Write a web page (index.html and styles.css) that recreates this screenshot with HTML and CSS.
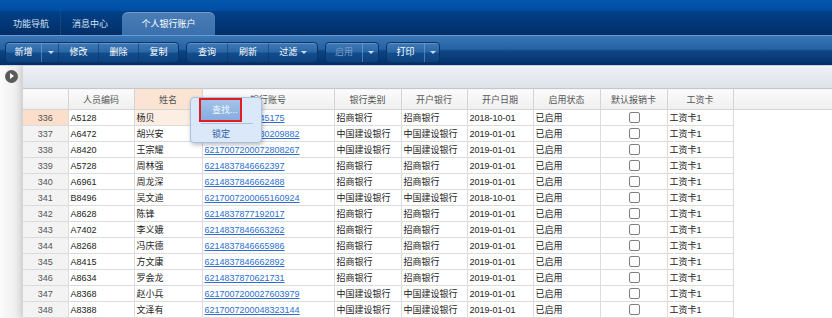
FILE: index.html
```html
<!DOCTYPE html>
<html lang="zh">
<head>
  <meta charset="UTF-8" />
  <title>个人银行账户</title>
  <link rel="stylesheet" href="styles.css">
</head>
<body>
<div class="page">
  <div class="topbar"></div>
  <div class="tabs">
    <div class="tab tab-nav">功能导航</div>
    <div class="tab tab-msg">消息中心</div>
    <div class="tab tab-active">个人银行账户</div>
  </div>

  <div class="toolbar">
    <div class="btn-group">
      <span class="btn w35">新增</span><span class="btn drop w17"><i class="arrow"></i></span>
      <span class="btn w40">修改</span><span class="btn w40">删除</span><span class="btn w40">复制</span>
    </div>
    <div class="btn-group">
      <span class="btn w40">查询</span><span class="btn w41">刷新</span><span class="btn w49">过滤 <i class="arrow"></i></span>
    </div>
    <div class="btn-group disabled">
      <span class="btn w36">启用</span><span class="btn drop w16"><i class="arrow"></i></span>
    </div>
    <div class="btn-group">
      <span class="btn w37">打印</span><span class="btn drop w15"><i class="arrow"></i></span>
    </div>
  </div>

  <div class="content">
    <div class="side">
      <span class="toggle"><i></i></span>
    </div>
    <div class="main">
      <div class="band"></div>
      <table class="grid">
        <colgroup>
          <col style="width:45px"><col style="width:66px"><col style="width:68px"><col style="width:132px">
          <col style="width:67px"><col style="width:66px"><col style="width:66px"><col style="width:67px">
          <col style="width:67px"><col style="width:66px"><col>
        </colgroup>
        <thead>
          <tr>
            <th></th><th>人员编码</th><th class="sel">姓名</th><th>银行账号</th><th>银行类别</th>
            <th>开户银行</th><th>开户日期</th><th>启用状态</th><th>默认报销卡</th><th>工资卡</th><th class="rest"></th>
          </tr>
        </thead>
        <tbody id="rows"></tbody>
      </table>
    </div>

    <div class="popup">
      <div class="menu-item active">查找...</div>
      <div class="menu-sep"></div>
      <div class="menu-item">锁定</div>
    </div>
  </div>
</div>

<script>
  const dados = [
    ['336', 'A5128', '杨贝', '6214837846645175', '招商银行', '招商银行', '2018-10-01'],
    ['337', 'A6472', '胡兴安', '6217007200030209882', '中国建设银行', '中国建设银行', '2019-01-01'],
    ['338', 'A8420', '王宗耀', '6217007200072808267', '中国建设银行', '中国建设银行', '2019-01-01'],
    ['339', 'A5728', '周林强', '6214837846662397', '招商银行', '招商银行', '2019-01-01'],
    ['340', 'A6961', '周龙深', '6214837846662488', '招商银行', '招商银行', '2019-01-01'],
    ['341', 'B8496', '吴文迪', '6217007200065160924', '中国建设银行', '中国建设银行', '2018-10-01'],
    ['342', 'A8628', '陈锋', '6214837877192017', '招商银行', '招商银行', '2019-01-01'],
    ['343', 'A7402', '李义娥', '6214837846663262', '招商银行', '招商银行', '2019-01-01'],
    ['344', 'A8268', '冯庆德', '6214837846665986', '招商银行', '招商银行', '2019-01-01'],
    ['345', 'A8415', '方文康', '6214837846662892', '招商银行', '招商银行', '2019-01-01'],
    ['346', 'A8634', '罗会龙', '6214837870621731', '招商银行', '招商银行', '2019-01-01'],
    ['347', 'A8368', '赵小兵', '6217007200027603979', '中国建设银行', '中国建设银行', '2019-01-01'],
    ['348', 'A8388', '文泽有', '6217007200048323144', '中国建设银行', '中国建设银行', '2019-01-01']
  ];

  const tbody = document.getElementById('rows');
  dados.forEach((d, i) => {
    const tr = document.createElement('tr');
    if (i === 0) tr.className = 'current';
    tr.innerHTML =
      '<td class="num">' + d[0] + '</td>' +
      '<td>' + d[1] + '</td>' +
      '<td class="name">' + d[2] + '</td>' +
      '<td><a href="#">' + d[3] + '</a></td>' +
      '<td>' + d[4] + '</td>' +
      '<td>' + d[5] + '</td>' +
      '<td>' + d[6] + '</td>' +
      '<td>已启用</td>' +
      '<td class="center"><span class="check"></span></td>' +
      '<td>工资卡1</td>' +
      '<td class="rest"></td>';
    tbody.appendChild(tr);
  });
</script>
</body>
</html>
```

FILE: styles.css
```css
body {
  margin: 0;
  font-family: "Liberation Sans", "Noto Sans CJK SC", sans-serif;
  font-size: 9px;
  background-color: #ffffff;
  color: #222;
}

.page {
  width: 832px;
  height: 318px;
  overflow: hidden;
}

.topbar {
  height: 11px;
  background: linear-gradient(#0157ad, #004ea3);
}

/* abas */
.tabs {
  display: flex;
  align-items: flex-end;
  height: 24px;
  background: linear-gradient(#02418a, #022e66);
}

.tab {
  height: 23px;
  line-height: 25px;
  color: #d5e2f2;
  box-sizing: border-box;
}

.tab-nav {
  width: 61px;
  padding-left: 13px;
  border-right: 1px dotted #2b5389;
}

.tab-msg {
  width: 61px;
  padding-left: 11px;
}

.tab-active {
  width: 93px;
  text-align: center;
  color: #fff;
  border-radius: 6px 6px 0 0;
  background: linear-gradient(#4a7db6, #3a70ad);
  box-shadow: inset 0 1px 0 rgba(255,255,255,0.25);
}

/* barra de ferramentas */
.toolbar {
  display: flex;
  gap: 6px;
  height: 31px;
  padding: 6px 0 0 5px;
  box-sizing: border-box;
  border-top: 1px solid #6b9ad0;
  border-bottom: 1px solid #cfd9e6;
  background: linear-gradient(#3a76b6 0%, #2562a3 45%, #0d4584 52%, #04306a 100%);
}

.btn-group {
  display: flex;
  height: 21px;
  border: 1px solid #0b3468;
  border-radius: 4px;
  box-sizing: border-box;
  overflow: hidden;
  background: linear-gradient(#3f79b7 0%, #2a66a6 48%, #134d8d 52%, #0d427f 100%);
  box-shadow: inset 0 1px 0 rgba(255,255,255,0.2);
}

.btn-group + .btn-group { margin-left: 1px; }

.btn {
  color: #fff;
  line-height: 19px;
  text-align: center;
  border-left: 1px solid rgba(10, 45, 90, 0.45);
  box-sizing: border-box;
}

.btn:first-child { border-left: none; }

.btn.drop { border-left: 1px solid rgba(150, 185, 225, 0.45); }

.disabled .btn { color: #7c9bc3; }

.arrow {
  display: inline-block;
  width: 0;
  height: 0;
  border-left: 3px solid transparent;
  border-right: 3px solid transparent;
  border-top: 3px solid #c9d9ee;
  vertical-align: middle;
  margin-left: 1px;
}

.w15 { width: 15px; }
.w16 { width: 16px; }
.w17 { width: 17px; }
.w35 { width: 35px; }
.w36 { width: 36px; }
.w37 { width: 37px; }
.w40 { width: 40px; }
.w41 { width: 41px; }
.w49 { width: 49px; }

/* conteudo */
.content {
  display: flex;
  position: relative;
  height: 252px;
}

.side {
  width: 23px;
  flex: none;
  background: linear-gradient(to right, #fbfbfb, #e9e9e9);
}

.toggle {
  display: block;
  width: 13px;
  height: 13px;
  margin: 4px 0 0 5px;
  border-radius: 50%;
  background: #5a5a5a;
  position: relative;
}

.toggle i {
  position: absolute;
  left: 5px;
  top: 3px;
  border-top: 3.5px solid transparent;
  border-bottom: 3.5px solid transparent;
  border-left: 4px solid #fff;
}

.main {
  flex: 1;
  background: #fff;
  box-shadow: -3px 0 6px rgba(0,0,0,0.12);
}

.band {
  height: 21px;
  background: linear-gradient(#edf0f5, #dee3ea);
  border-top: 1px solid #f4f6f9;
}

/* tabela */
.grid {
  border-collapse: collapse;
  table-layout: fixed;
  width: 100%;
}

.grid th {
  height: 20px;
  font-weight: normal;
  color: #555;
  text-align: center;
  background: linear-gradient(#fbfbfb, #efefef);
  border: 1px solid #d4d4d4;
  border-top-color: #c6c6c6;
  border-left: none;
  padding: 0;
}

.grid th.sel { background: #fbe4d3; }

.grid th.rest { border-right: none; }

.grid td {
  height: 15px;
  padding: 0 0 0 2px;
  border: 1px solid #dcdcdc;
  border-left: none;
  border-top: none;
  white-space: nowrap;
  overflow: hidden;
}

.grid td.num {
  text-align: center;
  color: #555;
  background: #f3f3f3;
  padding: 0;
}

.grid td.rest { border: none; }

.grid td.center { text-align: center; }

.grid tr.current td.num { background: #fbdfca; }

.grid tr.current td.name { background: #fdeee4; }

.grid a {
  color: #2b6fd3;
  text-decoration: underline;
}

.check {
  display: inline-block;
  width: 9px;
  height: 9px;
  border: 1px solid #808080;
  border-radius: 2px;
  background: #fff;
  vertical-align: middle;
}

/* menu de contexto */
.popup {
  position: absolute;
  left: 190px;
  top: 31px;
  width: 72px;
  height: 46px;
  box-sizing: border-box;
  padding: 2px 9px 0 10px;
  background: #dbe8f9;
  border: 1px solid #a5c2e6;
  border-radius: 4px;
  box-shadow: 1px 2px 4px rgba(0,0,0,0.25);
}

.menu-item {
  line-height: 20px;
  padding-left: 11px;
  color: #2a5ca6;
  white-space: nowrap;
}

.menu-item.active {
  width: 39px;
  padding-left: 11px;
  box-sizing: border-box;
  color: #f2f7fd;
  background: linear-gradient(#a2c2e8, #86ade0);
  outline: 2px solid #e31d1d;
  outline-offset: 0;
}

.menu-sep {
  margin-top: 3px;
  width: 52px;
  border-top: 1px solid #a9c3e3;
}
```
